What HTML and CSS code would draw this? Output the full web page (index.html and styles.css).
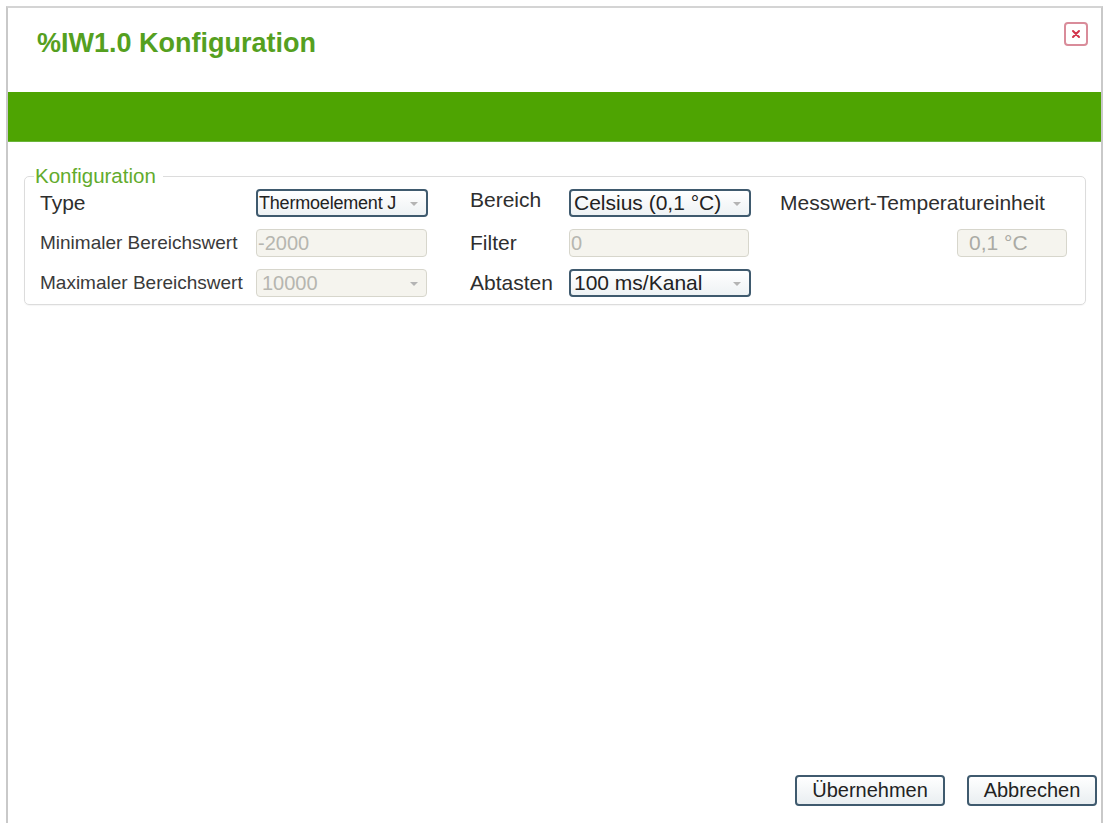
FILE: index.html
```html
<!DOCTYPE html>
<html lang="de">
<head>
<meta charset="utf-8">
<title>%IW1.0 Konfiguration</title>
<link rel="stylesheet" href="styles.css">
</head>
<body>
<div class="window">
  <div class="header">
    <h1 class="title">%IW1.0 Konfiguration</h1>
    <button class="close" aria-label="Schließen">
      <svg width="12" height="12" viewBox="0 0 12 12"><path d="M3 3 L9 9 M9 3 L3 9" stroke="#d2344a" stroke-width="2" stroke-linecap="round"/></svg>
    </button>
  </div>
  <div class="greenbar"></div>
  <div class="content">
    <fieldset class="group">
      <legend class="legend">Konfiguration</legend>
      <div class="grid">
        <div class="label big">Type</div>
        <div class="select narrow">Thermoelement J<span class="arrow"></span></div>
        <div class="label big up">Bereich</div>
        <div class="select">Celsius (0,1 °C)<span class="arrow"></span></div>
        <div class="label big">Messwert-Temperatureinheit</div>

        <div class="label">Minimaler Bereichswert</div>
        <div class="input disabled">-2000</div>
        <div class="label big">Filter</div>
        <div class="input disabled filter">0</div>
        <div class="unitcell"><div class="input disabled unit">0,1 °C</div></div>

        <div class="label">Maximaler Bereichswert</div>
        <div class="input disabled wide">10000<span class="arrow"></span></div>
        <div class="label big">Abtasten</div>
        <div class="select">100 ms/Kanal<span class="arrow"></span></div>
        <div></div>
      </div>
    </fieldset>
  </div>
  <div class="footer">
    <button class="btn b1">Übernehmen</button>
    <button class="btn b2">Abbrechen</button>
  </div>
</div>
</body>
</html>
```
FILE: styles.css
```css
* { box-sizing: border-box; }
html, body { margin: 0; padding: 0; background: #ffffff; }
body {
  font-family: "Liberation Sans", Arial, sans-serif;
  color: #2b2b2b;
  width: 1107px;
  height: 823px;
  overflow: hidden;
}
.window {
  margin: 6px 0 0 6px;
  width: 1097px;
  height: 830px;
  border: 2px solid #c9c9c9;
  border-top-color: #d4d4d4;
  background: #fff;
  display: flex;
  flex-direction: column;
}
.header {
  height: 84px;
  display: flex;
  align-items: flex-start;
  justify-content: space-between;
  padding: 0 13px 0 29px;
}
.title {
  margin: 20px 0 0 0;
  font-size: 27px;
  font-weight: bold;
  color: #55a01f;
}
.close {
  margin-top: 14px;
  width: 24px;
  height: 24px;
  border: 2px solid #d98c9a;
  border-radius: 4px;
  background: #fff;
  padding: 0;
  display: flex;
  align-items: center;
  justify-content: center;
}
.greenbar {
  height: 50px;
  background: #4ea402;
  border-bottom: 1px solid #6ab53a;
}
.content {
  padding: 25px 15px 0 16px;
  flex: 1;
}
.group {
  margin: 0;
  border: 1px solid #dcdcdc;
  border-radius: 5px;
  padding: 0 14px 1px 15px;
  box-shadow: 0 1px 1px rgba(0,0,0,0.04);
}
.legend {
  color: #62ab2c;
  font-size: 20.5px;
  line-height: 18px;
  padding: 0 7px 0 1px;
  margin-left: -6px;
}
.grid {
  margin-top: -2px;
  display: grid;
  grid-template-columns: 216px 214px 99px 211px 1fr;
  grid-auto-rows: 40px;
  align-items: center;
}
.label {
  font-size: 19px;
  color: #3a3a3a;
  white-space: nowrap;
}
.label.big { font-size: 21px; color: #2e2e2e; }
.label.up { margin-top: -6px; }
.select, .input {
  height: 28px;
  display: flex;
  align-items: center;
  position: relative;
  font-size: 21px;
  padding: 0 22px 0 3px;
  border-radius: 4px;
  white-space: nowrap;
}
.select {
  border: 2px solid #3f5a6e;
  background: linear-gradient(#ffffff, #eef2f4);
  color: #222;
  width: 182px;
}
.select.narrow {
  width: 172px;
  font-size: 18px;
  letter-spacing: -0.2px;
  padding-left: 1px;
}
.input {
  border: 1px solid #d7d6cc;
  background: #f5f4ee;
  color: #b6b6b0;
  width: 171px;
  font-size: 20px;
  padding-left: 1px;
}
.input.filter { width: 180px; }
.input.wide { padding-left: 5px; }
.unitcell { display: flex; justify-content: flex-end; padding-right: 4px; }
.input.unit { width: 110px; padding-left: 11px; color: #aaaaa4; font-size: 21px; }
.arrow {
  position: absolute;
  right: 8px;
  top: 50%;
  margin-top: -1px;
  width: 0;
  height: 0;
  border-left: 4px solid transparent;
  border-right: 4px solid transparent;
  border-top: 4px solid #b4b4b4;
}
.footer {
  display: flex;
  justify-content: flex-end;
  gap: 22px;
  padding: 0 4px 21px 0;
  margin-bottom: 7px;
}
.btn {
  font-family: "Liberation Sans", Arial, sans-serif;
  height: 31px;
  font-size: 20px;
  color: #222;
  border: 2px solid #3f5a6e;
  border-radius: 4px;
  background: linear-gradient(#ffffff, #e9eef1);
  padding: 0;
}
.b1 { width: 150px; }
.b2 { width: 130px; }
```
